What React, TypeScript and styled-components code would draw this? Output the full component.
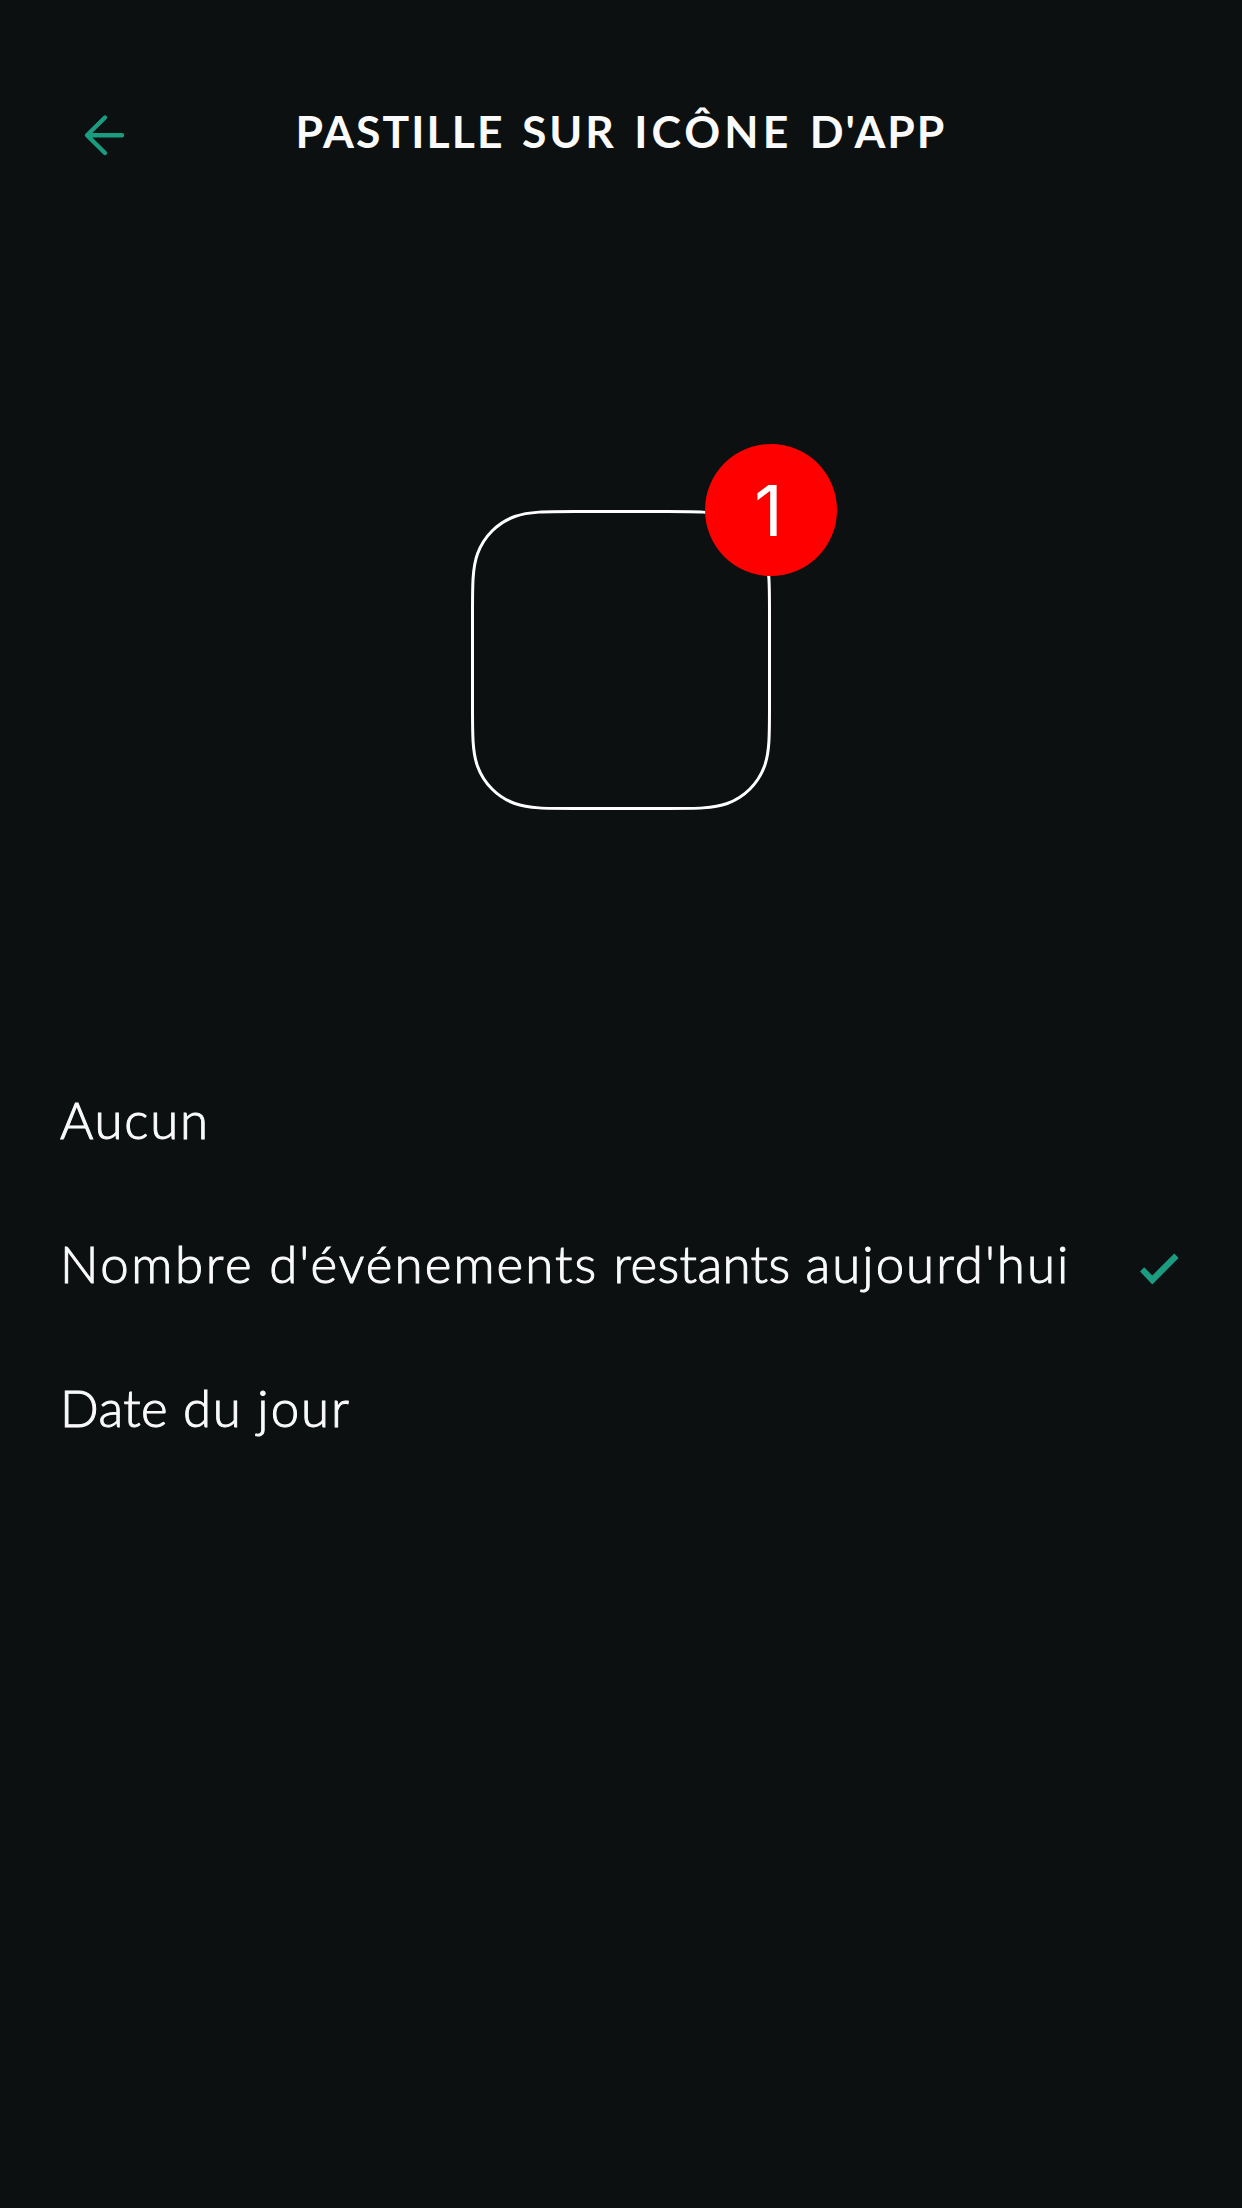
import React, { Fragment, useState } from "react";
import styled, { createGlobalStyle } from "styled-components";

const GlobalStyle = createGlobalStyle`
  html, body { margin: 0; padding: 0; background: #0c1011; }
  *, *::before, *::after { box-sizing: border-box; }
`;

const Screen = styled.main`
  width: 1242px;
  height: 2208px;
  display: flex;
  flex-direction: column;
  overflow: hidden;
  background: #0c1011;
  color: #fafafa;
  font-family: Lato, "Open Sans", sans-serif;
`;

const Header = styled.header`
  display: grid;
  grid-template-columns: 144px 1fr 144px;
  align-items: center;
  height: 132px;
  margin-top: 66px;
`;

const BackButton = styled.button`
  display: flex;
  align-items: center;
  height: 132px;
  padding: 6px 0 0 82px;
  border: 0;
  background: none;
  color: #1b9c80;
`;

const Title = styled.h1`
  margin: 0;
  padding-bottom: 3px;
  font-size: 44.5px;
  font-weight: 700;
  line-height: 60px;
  letter-spacing: 3.2px;
  word-spacing: 3.3px;
  text-align: center;
  text-transform: uppercase;
  white-space: nowrap;
`;

const Preview = styled.section`
  display: flex;
  justify-content: center;
  height: 822px;
  padding-top: 312px;
`;

const AppIcon = styled.div`
  position: relative;
  width: 300px;
  height: 300px;
`;

const Badge = styled.span`
  position: absolute;
  top: -66px;
  right: -66px;
  display: flex;
  align-items: center;
  justify-content: center;
  width: 132px;
  height: 132px;
  padding: 2px 5px 0 0;
  border-radius: 50%;
  background: #ff0000;
  color: #ffffff;
  font: 400 70px/1 Inter, "Liberation Sans", sans-serif;
`;

const Options = styled.div`
  display: flex;
  flex-direction: column;
  padding-top: 30px;
`;

const OptionRow = styled.button`
  display: flex;
  align-items: center;
  justify-content: space-between;
  height: 144px;
  padding: 0 61px 0 60px;
  border: 0;
  background: none;
  color: inherit;
  font: inherit;
  text-align: left;
`;

const OptionLabel = styled.span`
  padding-bottom: 5px;
  font-size: 51px;
  font-weight: 300;
  line-height: 64px;
  letter-spacing: 1.2px;
  white-space: nowrap;
  -webkit-text-stroke: 1px currentColor;
`;

const Word = styled.span<{ $tracking: number }>`
  letter-spacing: ${(p) => p.$tracking}px;
`;

const CheckIcon = styled.svg`
  flex: none;
  margin-top: 5px;
  color: #1b9c80;
`;

type TrackedWord = [text: string, tracking: number];

const title: TrackedWord[] = [
  ["Pastille", 2.1],
  ["sur", 2.9],
  ["icône", 4.1],
  ["d'app", 2],
];

const options: Array<{ id: string; words: TrackedWord[] }> = [
  { id: "none", words: [["Aucun", 1.8]] },
  {
    id: "events",
    words: [
      ["Nombre", 2.6],
      ["d'événements", 2.1],
      ["restants", 0.4],
      ["aujourd'hui", 2],
    ],
  },
  { id: "date", words: [["Date", 0.4], ["du", 1.5], ["jour", 2]] },
];

function TrackedText({ words }: { words: TrackedWord[] }) {
  return words.map(([text, tracking], i) => (
    <Fragment key={text}>
      {i > 0 && " "}
      <Word $tracking={tracking}>{text}</Word>
    </Fragment>
  ));
}

const SIDE = 297;
const RADIUS = 67;

// Distances from a corner along its two edges, as multiples of the radius.
const CORNER = [
  [1.528665, 0],
  [1.088493, 0],
  [0.837, 0],
  [0.631494, 0.074911],
  [0.372824, 0.16906],
  [0.16906, 0.372824],
  [0.074911, 0.631494],
  [0, 0.837],
  [0, 1.088493],
  [0, 1.528665],
];

// Square with continuous-curvature corners, drawn clockwise from the top edge.
function continuousSquare(size: number, r: number, inset: number) {
  const turns: Array<(a: number, b: number) => [number, number]> = [
    (a, b) => [size - a, b],
    (a, b) => [size - b, size - a],
    (a, b) => [a, size - b],
    (a, b) => [b, a],
  ];
  const parts = turns.map((turn, i) => {
    // The turn maps (edge in, edge out), so odd corners start on a vertical edge.
    const [first, ...rest] = CORNER.map(([a, b]) =>
      turn(a * r, b * r).map((n) => (n + inset).toFixed(2)).join(" ")
    );
    return `${i === 0 ? "M" : "L"}${first}C${rest.join(" ")}`;
  });
  return parts.join("") + "Z";
}

export default function App() {
  const [selected, setSelected] = useState("events");
  return (
    <>
      <GlobalStyle />
      <Screen>
        <Header>
          <BackButton aria-label="Retour">
            <svg width="44" height="44" viewBox="0 0 44 44" fill="none" stroke="currentColor" strokeWidth="4.4" strokeLinecap="round" strokeLinejoin="round">
              <path d="M23 4.5 5 22.2 23 40M6 22.2H40" />
            </svg>
          </BackButton>
          <Title>
            <TrackedText words={title} />
          </Title>
        </Header>
        <Preview>
          <AppIcon>
            <svg width="300" height="300" viewBox="0 0 300 300" fill="none" stroke="#ffffff" strokeWidth="3">
              <path d={continuousSquare(SIDE, RADIUS, 1.5)} />
            </svg>
            <Badge>1</Badge>
          </AppIcon>
        </Preview>
        <Options role="radiogroup">
          {options.map((o) => (
            <OptionRow key={o.id} role="radio" aria-checked={selected === o.id} onClick={() => setSelected(o.id)}>
              <OptionLabel>
                <TrackedText words={o.words} />
              </OptionLabel>
              {selected === o.id && (
                <CheckIcon width="42" height="34" viewBox="0 0 42 34" fill="currentColor">
                  <path d="M1 19.5 5.2 15.3 13.3 23.4 35.3 1.6 39.6 6 13.3 32.4Z" />
                </CheckIcon>
              )}
            </OptionRow>
          ))}
        </Options>
      </Screen>
    </>
  );
}
